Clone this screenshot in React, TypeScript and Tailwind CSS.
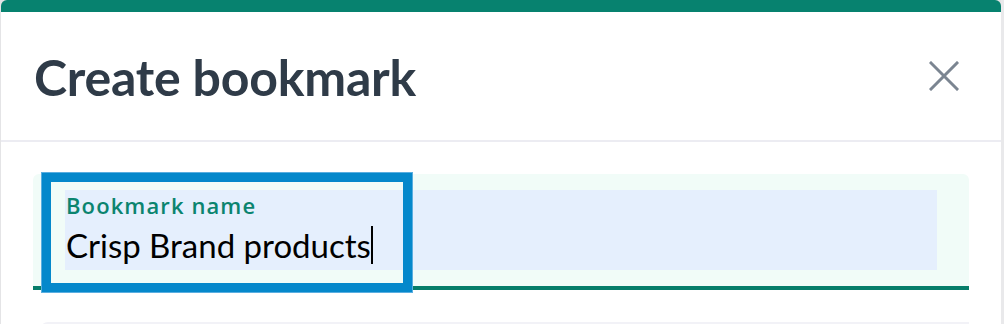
import React from "react";

export default function App() {
  return (
    <div className="w-[1004px] h-[324px] overflow-hidden bg-[#e4e4e6] flex pl-[1px]" style={{ fontFamily: "Lato, 'Noto Sans', sans-serif" }}>
      <div className="w-[1000px] shrink-0 bg-white rounded-t-[6px] border-t-[12px] border-[#07826f] flex flex-col">
        <div className="h-[130px] shrink-0 flex items-center justify-between pl-[33px] pr-[42px] border-b-2 border-[#ececf2]">
          <h1 className="text-[50px] font-bold text-[#2f3b48] leading-none tracking-[-0.2px] pt-[2px]">Create bookmark</h1>
          <svg width="30" height="30" viewBox="0 0 30 30" className="text-[#7b8591]">
            <path d="M2 2 L28 28 M28 2 L2 28" stroke="currentColor" strokeWidth="3" strokeLinecap="square" />
          </svg>
        </div>
        <div className="flex flex-col gap-8 pt-8 pl-[32px] pr-[32px]">
          <div className="relative bg-[#f1fcf8] rounded-t-[6px] border-b-4 border-[#067d6a] pt-4 pb-4 px-8">
            <div className="h-[80px] bg-[#e5effd] flex flex-col justify-start pt-[1px]">
              <label className="text-[22px] font-semibold text-[#0b846f] leading-[28px] tracking-[1.1px] pl-[1px]" style={{ fontFamily: "'Open Sans', sans-serif" }}>Bookmark name</label>
              <div className="flex items-center h-[40px] mt-[6px]">
                <span className="text-[33px] text-black leading-[40px] pl-[1px]">Crisp Brand products</span>
                <span className="w-[2px] h-[38px] bg-black"></span>
              </div>
            </div>
            <div className="absolute left-[9px] top-[-1px] w-[370px] h-[119px] border-[9px] border-[#0588cb] outline outline-1 outline-[#5aaee0]"></div>
          </div>
          <div className="h-[40px] ml-[7px] border-t-2 border-l-2 border-[#f2f2f7] rounded-tl-[8px]"></div>
        </div>
      </div>
      <div className="flex-1 bg-[#e9e9eb]"></div>
    </div>
  );
}
